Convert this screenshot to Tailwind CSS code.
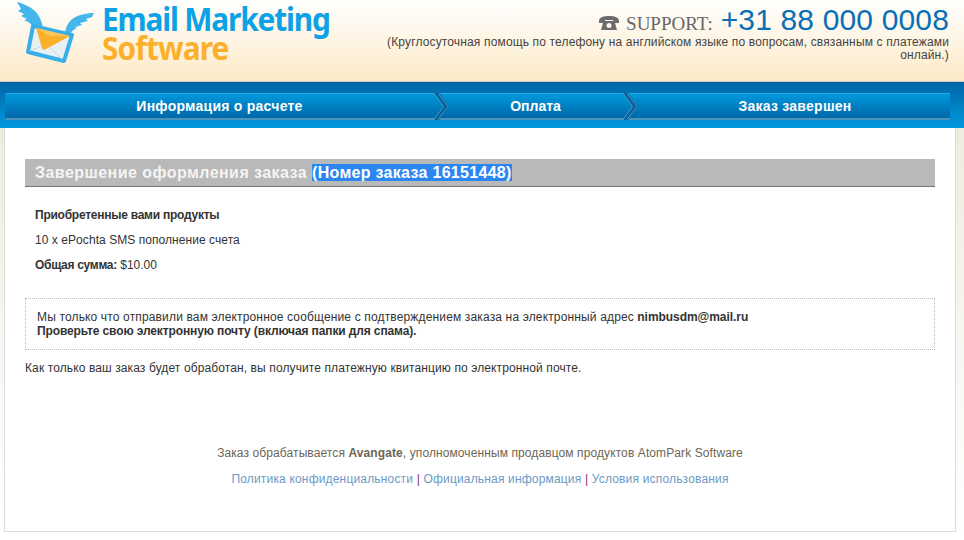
<!DOCTYPE html>
<html lang="ru">
  <head>
    <meta charset="UTF-8" />
    <title>Email Marketing Software</title>
    <script src="https://cdn.jsdelivr.net/npm/@tailwindcss/browser@4"></script>
  </head>
  <body class="h-[540px] overflow-hidden flex flex-col bg-white font-['Liberation_Sans',Arial,sans-serif] text-[12px] text-[#333]">
    <!-- шапка -->
    <header class="h-[82px] shrink-0 flex justify-between border-b border-[#cfcabc] bg-gradient-to-b from-white to-[#fdeac6] pr-[15px]">
      <div class="flex">
        <svg class="ml-[15px] mt-[1px]" width="88" height="64" viewBox="15 1 88 64">
          <path d="M17 2C25 4 32 8 36 12 40 17 42 22 43 28L33 26C30 23 27 21 24 20L27 19 21 16 24 14 18 11 21 9Z" fill="#45b6ec"/>
          <path d="M94 13C86 13 77 15 71 20 68 23 66 27 65 32L70 34C72 31 74 29 77 28L75 27 82 25 80 23 88 21 86 19 92 17Z" fill="#45b6ec"/>
          <path d="M33 26L72 35 64 61 28 52Z" fill="#e9f0f4" stroke="#38afe9" stroke-width="4" stroke-linejoin="round"/>
          <path d="M30 51L46 44 62 59" fill="none" stroke="#c9d8e1"/>
          <path d="M36 28L70 36 46 49C44 50 43 50 42 48Z" fill="#fbb02c"/>
          <path d="M36 28L70 36 50 36Z" fill="#fdc65c"/>
        </svg>
        <div class="ml-[-1px] mt-[4px] font-['Noto_Sans',sans-serif] font-bold text-[33px] leading-[29px] scale-x-[0.905] origin-left">
          <div class="text-[#0da2e5] tracking-[-1.3px]">Email Marketing</div>
          <div class="text-[#fbb02c] tracking-[-1px]">Software</div>
        </div>
      </div>
      <div class="w-[570px] text-right">
        <div class="mt-[4px] h-[32px] flex justify-end items-baseline">
          <svg class="self-center mr-[7px] mt-[5px]" width="20" height="14" viewBox="0 0 20 14">
            <path d="M0 5C0 1 5 0 10 0S20 1 20 5V7H14V4H6V7H0Z" fill="#6b6b6b"/>
            <path d="M4 7L6 5H14L16 7 18 14H2ZM10 7A2.500 2.500 0 1 0 10 12 2.500 2.500 0 1 0 10 7Z" fill="#6b6b6b" fill-rule="evenodd"/>
          </svg>
          <span class="font-['Liberation_Serif',serif] text-[19px] text-[#666] mr-[8px]">SUPPORT:</span>
          <span class="text-[30px] tracking-[0.15px] leading-[32px] text-[#0a70b5]">+31 88 000 0008</span>
        </div>
        <p class="leading-[13px] tracking-[0.15px] text-[#444]">(Круглосуточная помощь по телефону на английском языке по вопросам, связанным с платежами онлайн.)</p>
      </div>
    </header>

    <!-- шаги заказа -->
    <div class="h-[46px] shrink-0 pt-[11px] bg-gradient-to-b from-[#0066a8] to-[#0099dc]">
      <div class="relative ml-[5px] w-[945px] h-[27px] flex rounded-l-[2px] border-t border-t-[#2fa6e0] border-b-2 border-b-[#4c94bd] bg-gradient-to-b from-[#0099dd] to-[#0068a9] text-[14px] leading-[25px] font-bold tracking-[0.25px] text-white text-center">
        <span class="w-[429px]">Информация о расчете</span>
        <span class="w-[203px] tracking-normal">Оплата</span>
        <span class="w-[313px] pl-[3px]">Заказ завершен</span>
        <svg class="absolute left-[426px] top-[-1px]" width="20" height="27" viewBox="0 0 20 27" fill="none">
          <path d="M3 0L13 13.500 3 27H8L18 13.500 8 0Z" fill="#0b5f98"/>
          <path d="M0 0.500H3L12.500 13.500 3 26.500H0" stroke="#3f9ccc"/>
          <path d="M7 0.500L17 13.500 7 26.500" stroke="#3f9ccc"/>
        </svg>
        <svg class="absolute left-[615px] top-[-1px]" width="20" height="27" viewBox="0 0 20 27" fill="none">
          <path d="M3 0L13 13.500 3 27H8L18 13.500 8 0Z" fill="#0b5f98"/>
          <path d="M0 0.500H3L12.500 13.500 3 26.500H0" stroke="#3f9ccc"/>
          <path d="M7 0.500L17 13.500 7 26.500" stroke="#3f9ccc"/>
        </svg>
      </div>
    </div>

    <!-- основной блок -->
    <div class="h-[404px] shrink-0 bg-gradient-to-b from-[#eeecdf] to-white pl-[4px] pr-[8px]">
      <main class="h-full border-x border-b border-[#dcdcdc] bg-white px-[20px] pt-[31px]">
        <h1 class="h-[28px] border-b border-[#777] bg-[#b9b9b9] pl-[10px] text-[16px] tracking-[0.45px] leading-[27px] font-bold text-[#f4f4f4]">Завершение оформления заказа <span class="bg-[#2c86f0] text-white tracking-[0.3px]">(Номер заказа 16151448)</span></h1>
        <div class="px-[10px] pt-[21px] flex flex-col gap-[11px] leading-[14px]">
          <p class="font-bold tracking-[-0.25px]">Приобретенные вами продукты</p>
          <p class="tracking-[0.06px]">10 x ePochta SMS пополнение счета</p>
          <p><b class="tracking-[-0.3px]">Общая сумма:</b> $10.00</p>
        </div>
        <div class="mt-[26px] h-[52px] border border-dotted border-[#bbb] pl-[11px] pt-[11px] leading-[14px]">
          <span class="tracking-[0.15px]">Мы только что отправили вам электронное сообщение с подтверждением заказа на электронный адрес</span> <b class="tracking-[-0.05px]">nimbusdm@mail.ru</b><br />
          <b class="tracking-[-0.12px]">Проверьте свою электронную почту (включая папки для спама).</b>
        </div>
        <p class="mt-[11px] leading-[14px] tracking-[0.11px]">Как только ваш заказ будет обработан, вы получите платежную квитанцию по электронной почте.</p>
        <footer class="mt-[71px] text-center leading-[14px] text-[#6d6654] tracking-[0.1px]">
          <p>Заказ обрабатывается <b>Avangate</b>, уполномоченным продавцом продуктов AtomPark Software</p>
          <p class="mt-[12px] text-[#6b9ac4] tracking-[0.175px]">Политика конфиденциальности <span class="text-[#8a2a84]">|</span> Официальная информация <span class="text-[#8a2a84]">|</span> Условия использования</p>
        </footer>
      </main>
    </div>
  </body>
</html>
